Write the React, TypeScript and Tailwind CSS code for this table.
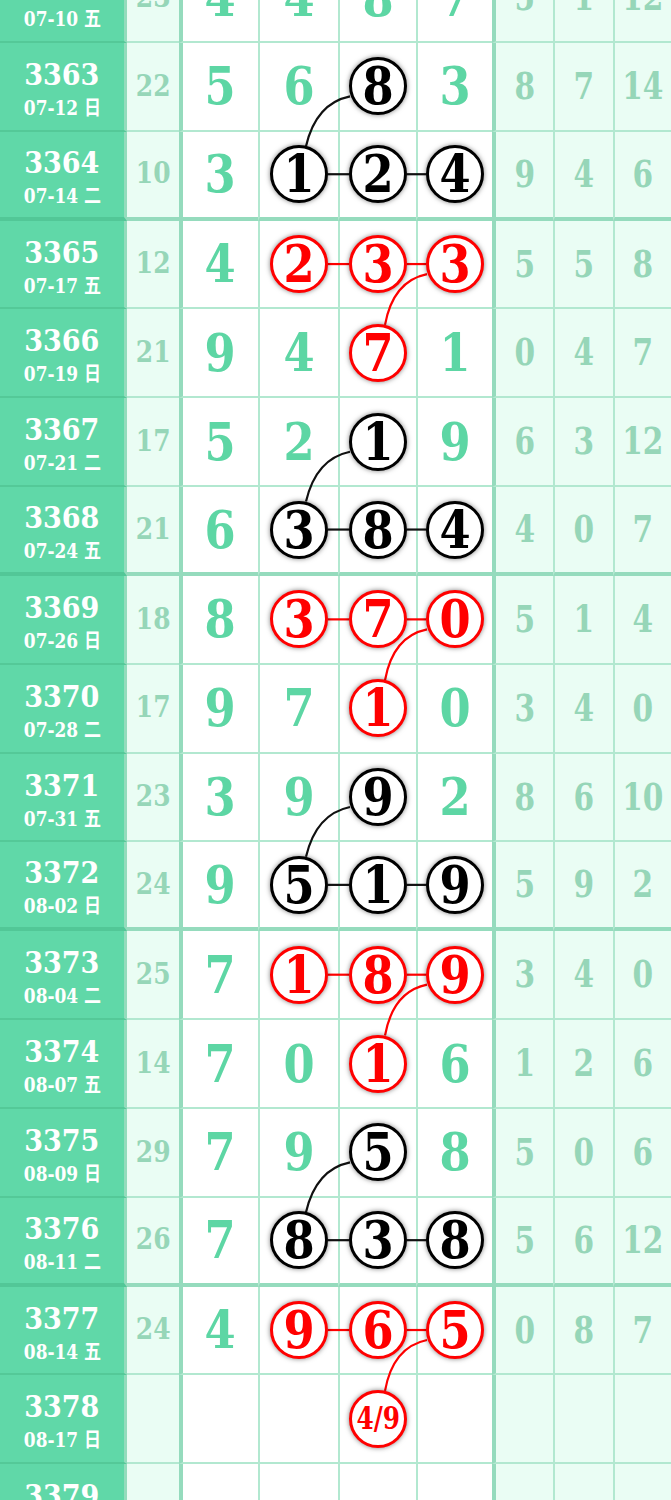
import React from 'react';

// row geometry, measured off the chart
const RH = 88.83;
const TOP0 = 43 - RH;
const CX = [299, 378, 455]; // circle centres for the three middle columns
const R = 29;

type Kind = 'none' | 'single' | 'triple';
type Row = { no: string; date: string; s: string; d: string[]; r: string[]; kind: Kind; red?: boolean };

const rows: Row[] = [
  { no: '3362', date: '07-10 五', s: '23', d: ['4', '4', '8', '7'], r: ['5', '1', '12'], kind: 'none' },
  { no: '3363', date: '07-12 日', s: '22', d: ['5', '6', '8', '3'], r: ['8', '7', '14'], kind: 'single' },
  { no: '3364', date: '07-14 二', s: '10', d: ['3', '1', '2', '4'], r: ['9', '4', '6'], kind: 'triple' },
  { no: '3365', date: '07-17 五', s: '12', d: ['4', '2', '3', '3'], r: ['5', '5', '8'], kind: 'triple', red: true },
  { no: '3366', date: '07-19 日', s: '21', d: ['9', '4', '7', '1'], r: ['0', '4', '7'], kind: 'single', red: true },
  { no: '3367', date: '07-21 二', s: '17', d: ['5', '2', '1', '9'], r: ['6', '3', '12'], kind: 'single' },
  { no: '3368', date: '07-24 五', s: '21', d: ['6', '3', '8', '4'], r: ['4', '0', '7'], kind: 'triple' },
  { no: '3369', date: '07-26 日', s: '18', d: ['8', '3', '7', '0'], r: ['5', '1', '4'], kind: 'triple', red: true },
  { no: '3370', date: '07-28 二', s: '17', d: ['9', '7', '1', '0'], r: ['3', '4', '0'], kind: 'single', red: true },
  { no: '3371', date: '07-31 五', s: '23', d: ['3', '9', '9', '2'], r: ['8', '6', '10'], kind: 'single' },
  { no: '3372', date: '08-02 日', s: '24', d: ['9', '5', '1', '9'], r: ['5', '9', '2'], kind: 'triple' },
  { no: '3373', date: '08-04 二', s: '25', d: ['7', '1', '8', '9'], r: ['3', '4', '0'], kind: 'triple', red: true },
  { no: '3374', date: '08-07 五', s: '14', d: ['7', '0', '1', '6'], r: ['1', '2', '6'], kind: 'single', red: true },
  { no: '3375', date: '08-09 日', s: '29', d: ['7', '9', '5', '8'], r: ['5', '0', '6'], kind: 'single' },
  { no: '3376', date: '08-11 二', s: '26', d: ['7', '8', '3', '8'], r: ['5', '6', '12'], kind: 'triple' },
  { no: '3377', date: '08-14 五', s: '24', d: ['4', '9', '6', '5'], r: ['0', '8', '7'], kind: 'triple', red: true },
  { no: '3378', date: '08-17 日', s: '', d: ['', '', '4/9', ''], r: ['', '', ''], kind: 'single', red: true },
  { no: '3379', date: '08-19 二', s: '', d: ['', '', '', ''], r: ['', '', ''], kind: 'none' },
];

const thickRow = (i: number) => i % 4 === 2;
const rowCy = (i: number) => TOP0 + i * RH + (thickRow(i) ? 42.4 : 43.4);
const circled = (row: Row, k: number) =>
  (row.kind === 'single' && k === 2) || (row.kind === 'triple' && k >= 1);

const SERIF = "font-['DejaVu_Serif','Noto_Sans_CJK_SC',serif]";

function Circle({ text, red }: { text: string; red?: boolean }) {
  const small = text.length > 1;
  return (
    <div
      className={`relative z-10 flex h-[58px] w-[58px] items-center justify-center rounded-full border-[3px] bg-white shadow-[0_0_5px_rgba(0,0,0,0.5)] ${
        red ? 'border-[#ff0000] text-[#ff0000]' : 'border-black text-black'
      }`}
    >
      <span
        className={`${SERIF} inline-block font-bold leading-none ${
          small ? 'scale-x-[0.8] text-[31px]' : 'scale-x-[0.86] text-[52px]'
        }`}
      >
        {text}
      </span>
    </div>
  );
}

function Connectors() {
  const parts: React.ReactNode[] = [];
  rows.forEach((row, i) => {
    const col = row.red ? '#ff0000' : '#111111';
    const cy = rowCy(i);
    if (row.kind === 'triple') {
      parts.push(<line key={`a${i}`} x1={CX[0] + R} y1={cy} x2={CX[1] - R} y2={cy} stroke={col} strokeWidth={2.2} />);
      parts.push(<line key={`b${i}`} x1={CX[1] + R} y1={cy} x2={CX[2] - R} y2={cy} stroke={col} strokeWidth={2.2} />);
    }
    const next = rows[i + 1];
    if (!next || row.kind === 'none' || next.kind === 'none' || next.kind === row.kind) return;
    // upper single -> arc from the left circle below; upper triple -> arc down to the middle circle
    const ux = row.kind === 'single' ? CX[1] : CX[2];
    const lx = row.kind === 'single' ? CX[0] : CX[1];
    const uy = cy;
    const ly = rowCy(i + 1);
    parts.push(
      <path
        key={`c${i}`}
        d={`M ${lx + 7} ${ly - 28} Q ${ux - 62} ${uy + 17} ${ux - 28} ${uy + 10}`}
        fill="none"
        stroke={col}
        strokeWidth={2.2}
      />,
    );
  });
  return (
    <svg className="pointer-events-none absolute left-0 top-0" width={671} height={1500} viewBox="0 0 671 1500">
      {parts}
    </svg>
  );
}

export default function App() {
  return (
    <div className="relative h-[1500px] w-[671px] overflow-hidden bg-white">
      <div className="mt-[-45.83px]">
        {rows.map((row, i) => {
          const bb = thickRow(i) ? 'border-b-4 border-b-[#95dbbd]' : 'border-b-2 border-b-[#b2e8d0]';
          return (
            <div key={row.no} className="grid h-[88.83px] grid-cols-[127px_52px_79px_80px_78px_76px_61px_60px_58px]">
              <div
                className={`flex flex-col items-center justify-center gap-[5px] border-r-[3px] border-r-[#93dcbc] bg-[#60d8a8] pt-[4px] text-white ${
                  thickRow(i) ? 'border-b-4 border-b-[#52c797]' : 'border-b-2 border-b-[#54c998]'
                }`}
              >
                <div className={`${SERIF} inline-block scale-x-[0.9] text-[30px] font-bold leading-[34px]`}>{row.no}</div>
                <div className={`${SERIF} inline-block scale-x-[0.85] text-[20px] font-bold leading-[22px]`}>{row.date}</div>
              </div>
              <div className={`flex items-center justify-center bg-[#eafdf4] ${bb}`}>
                <span className={`${SERIF} inline-block scale-x-[0.86] text-[29px] font-bold text-[#96d6b8]`}>{row.s}</span>
              </div>
              {row.d.map((v, k) => (
                <div
                  key={k}
                  className={`flex items-center justify-center bg-white ${bb} ${
                    k === 0 ? 'border-l-4 border-l-[#95dbbd]' : 'border-l-2 border-l-[#b2e8d0]'
                  }`}
                >
                  {v !== '' && circled(row, k) ? (
                    <Circle text={v} red={row.red} />
                  ) : (
                    <span className={`${SERIF} inline-block scale-x-[0.86] text-[52px] font-bold leading-none text-[#5dd6a4]`}>
                      {v}
                    </span>
                  )}
                </div>
              ))}
              {row.r.map((v, k) => (
                <div
                  key={k}
                  className={`flex items-center justify-center bg-[#eafdf4] ${bb} ${
                    k === 0 ? 'border-l-4 border-l-[#95dbbd]' : 'border-l-2 border-l-[#b2e8d0]'
                  }`}
                >
                  <span className={`${SERIF} inline-block scale-x-[0.8] text-[37px] font-bold leading-none text-[#96d6b8]`}>
                    {v}
                  </span>
                </div>
              ))}
            </div>
          );
        })}
      </div>
      <Connectors />
    </div>
  );
}
